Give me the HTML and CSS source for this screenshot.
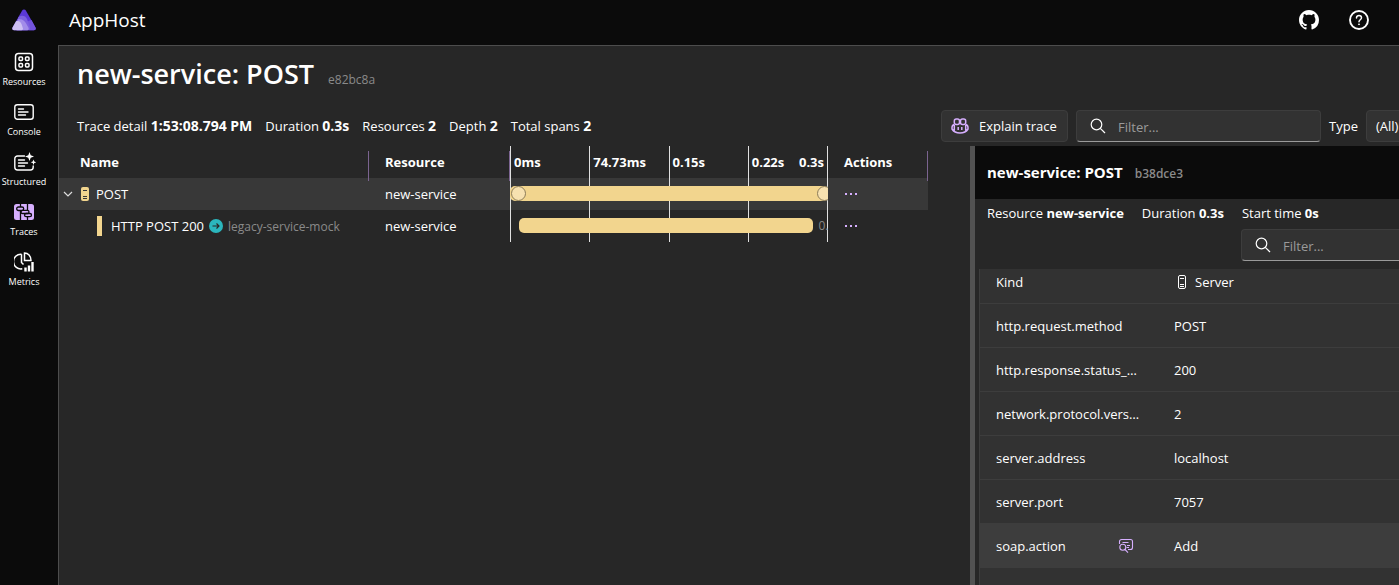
FILE: index.html
```html
<!DOCTYPE html>
<html lang="en">
<head>
    <meta charset="UTF-8">
    <meta name="viewport" content="width=device-width, initial-scale=1.0">
    <title>AppHost traces</title>
    <link rel="stylesheet" href="styles.css">
</head>
<body>
    <header class="top-bar">
        <a class="logo" href="#" aria-label="Home">
            <svg width="24" height="22" viewBox="0 0 24 22">
                <path d="M12 .5c.9 0 1.500.4 2 1.200l9.500 16.800c.7 1.300-.1 2.700-1.500 2.700H2C.6 21.200-.2 19.800.5 18.500L10 1.700C10.500.9 11.100.5 12 .5z" fill="#5a38d6"/>
                <path d="M15 12.500l4.500-1.500 4 7.500c.7 1.300-.1 2.700-1.500 2.700h-5z" fill="#7455dd"/>
                <path d="M6.300 8.200C9.500 5.500 13.500 6.500 15 10l3 8.500c.5 1.500-.3 2.700-1.800 2.700H4z" fill="#7d61df"/>
                <path d="M5.500 10.500c4-1.200 7 .8 8.500 3.700l2.500 4.600c.6 1.200 0 2.400-1.300 2.400H5z" fill="#a28ce9"/>
                <path d="M4 12.300c3-.9 5 1 5.700 3.200l1.200 3.700c.4 1.200-.3 2-1.400 2H2C.6 21.200-.2 19.800.5 18.500z" fill="#cdbff3"/>
            </svg>
        </a>
        <span class="app-name">AppHost</span>
        <div class="top-actions">
            <a href="#" aria-label="GitHub">
                <svg width="20" height="20" viewBox="0 0 16 16" fill="#fff"><path d="M8 0C3.580 0 0 3.580 0 8c0 3.540 2.290 6.530 5.470 7.590.4.070.55-.17.55-.38 0-.19-.01-.82-.01-1.490-2.010.37-2.530-.49-2.690-.94-.09-.23-.48-.94-.82-1.130-.28-.15-.68-.52-.01-.53.63-.01 1.080.58 1.230.82.72 1.210 1.870.87 2.330.66.07-.52.28-.87.51-1.070-1.780-.2-3.640-.89-3.640-3.950 0-.87.31-1.590.82-2.150-.08-.2-.36-1.020.08-2.120 0 0 .67-.21 2.200.82.64-.18 1.320-.27 2-.27s1.360.09 2 .27c1.530-1.040 2.200-.82 2.200-.82.44 1.100.16 1.920.08 2.120.51.56.82 1.270.82 2.150 0 3.070-1.870 3.750-3.650 3.950.29.25.54.73.54 1.480 0 1.070-.01 1.930-.01 2.200 0 .21.15.46.55.38A8.010 8.010 0 0 0 16 8c0-4.420-3.580-8-8-8z"/></svg>
            </a>
            <button type="button" class="icon-btn" aria-label="Help">
                <svg width="22" height="22" viewBox="0 0 22 22" fill="none" stroke="#fff"><circle cx="11" cy="11" r="9" stroke-width="1.900"/><path d="M8.500 9c0-1.600 1.100-2.600 2.500-2.600s2.500 1 2.500 2.400c0 1.900-2.500 2-2.500 4" stroke-width="1.500" stroke-linecap="round"/><circle cx="11" cy="15.300" r=".5" fill="#fff"/></svg>
            </button>
        </div>
    </header>

    <div class="layout">
        <nav class="side-nav">
            <a href="#">
                <svg width="20" height="20" viewBox="0 0 20 20" fill="none" stroke="#fff" stroke-width="1.500"><rect x="1.500" y="1.500" width="17" height="17" rx="3"/><rect x="5" y="5" width="3.500" height="3.500" rx="1"/><rect x="11.500" y="5" width="3.500" height="3.500" rx="1"/><rect x="5" y="11.500" width="3.500" height="3.500" rx="1"/><rect x="11.500" y="11.500" width="3.500" height="3.500" rx="1"/></svg>
                <span>Resources</span>
            </a>
            <a href="#">
                <svg width="20" height="20" viewBox="0 0 20 20" fill="none" stroke="#fff" stroke-width="1.400" stroke-linecap="round"><rect x=".8" y="2.700" width="18.400" height="14.600" rx="2.500"/><path d="M4.500 7h5M4.500 10h9.500M4.500 13h7"/></svg>
                <span>Console</span>
            </a>
            <a href="#">
                <svg class="wide" width="22" height="20" viewBox="0 0 22 20" fill="none" stroke="#fff" stroke-width="1.400" stroke-linecap="round"><path d="M10.500 4H3.500A2.700 2.700 0 0 0 .8 6.700v8.600A2.700 2.700 0 0 0 3.500 18h13a2.700 2.700 0 0 0 2.700-2.700V14M4.500 8h6M4.500 11h9M4.500 14h6"/><path d="M15.500 0l1.200 3.300L20 4.500l-3.300 1.200L15.500 9l-1.200-3.300L11 4.500l3.300-1.200zM19.500 7.500l.8 2 2 .8-2 .8-.8 2-.8-2-2-.8 2-.8z" fill="#fff" stroke="none"/></svg>
                <span>Structured</span>
            </a>
            <a href="#" class="active">
                <svg width="20" height="20" viewBox="0 0 20 20" fill="none" stroke="#0b0b0b" stroke-width="1.300"><rect x="0" y="2" width="20" height="16" rx="2.500" fill="#d6affe" stroke="none"/><path d="M6.500 2v3M6.500 8.500V18M13.500 2v6M13.500 14.500V18"/><rect x="2.700" y="5" width="7" height="3.500" rx="1.700"/><rect x="7" y="8.300" width="8" height="3.200" rx="1.600"/><rect x="10.500" y="11.500" width="7" height="3.200" rx="1.600"/></svg>
                <span>Traces</span>
            </a>
            <a href="#">
                <svg width="20" height="20" viewBox="0 0 20 20" fill="none" stroke="#fff" stroke-width="1.500"><path d="M7.500 2.300a7.300 7.300 0 1 0 .8 14.400M10.500 1v7.500H17C17 4 14 1 10.500 1zM7.500 2.300v8.200l2 2"/><path d="M11.500 19.500v-4M15 19.500v-6M18.500 19.500v-9.500" stroke-width="2.400"/></svg>
                <span>Metrics</span>
            </a>
        </nav>

        <main class="page">
            <div class="page-title">
                <h1>new-service: POST</h1>
                <span class="trace-id">e82bc8a</span>
            </div>

            <div class="toolbar">
                <div class="facts trace-facts">
                    <span>Trace detail <b>1:53:08.794 PM</b></span>
                    <span>Duration <b>0.3s</b></span>
                    <span>Resources <b>2</b></span>
                    <span>Depth <b>2</b></span>
                    <span>Total spans <b>2</b></span>
                </div>
                <div class="controls">
                    <button type="button" class="btn">
                        <svg width="18" height="16" viewBox="0 0 18 16" fill="none" stroke="#d6affe" stroke-width="1.500"><rect x="3.300" y="1" width="5.200" height="5.500" rx="2"/><rect x="9.500" y="1" width="5.200" height="5.500" rx="2"/><path d="M3.300 6.500C1.500 7 1 8 1 9.500V11c1.500 2.500 4.500 4 8 4s6.500-1.500 8-4V9.500c0-1.500-.5-2.500-2.300-3M3.300 7v5.500M14.700 7v5.500M7.200 9v3M10.800 9v3"/></svg>
                        Explain trace
                    </button>
                    <label class="search">
                        <svg width="16" height="16" viewBox="0 0 16 16" fill="none" stroke="#fff" stroke-width="1.200"><circle cx="6.500" cy="6.500" r="5.300"/><path d="M10.300 10.300L15 15"/></svg>
                        <input type="text" placeholder="Filter..." aria-label="Filter spans">
                    </label>
                    <label for="span-type">Type</label>
                    <select id="span-type">
                        <option>(All)</option>
                    </select>
                </div>
            </div>

            <div class="split">
                <section class="trace-pane">
                    <table class="spans">
                        <colgroup>
                            <col class="col-name">
                            <col class="col-resource">
                            <col>
                            <col class="col-actions">
                        </colgroup>
                        <thead>
                            <tr>
                                <th class="resizable">Name</th>
                                <th class="resizable">Resource</th>
                                <th class="timeline">
                                    <div class="ticks">
                                        <span>0ms</span>
                                        <span>74.73ms</span>
                                        <span>0.15s</span>
                                        <span class="last"><span>0.22s</span><span>0.3s</span></span>
                                    </div>
                                </th>
                                <th class="resizable">Actions</th>
                            </tr>
                        </thead>
                        <tbody>
                            <tr class="selected">
                                <td>
                                    <div class="span-name">
                                        <svg width="10" height="10" viewBox="0 0 10 10" fill="none" stroke="#ddd" stroke-width="1.200"><path d="M1 3l4 4 4-4"/></svg>
                                        <svg class="server" width="8" height="14" viewBox="0 0 8 14"><rect width="8" height="14" rx="2" fill="#f2d58e"/><path d="M2 3.500h4M2 9.500h4M2 11.500h4" stroke="#383838"/></svg>
                                        <span>POST</span>
                                    </div>
                                </td>
                                <td>new-service</td>
                                <td class="timeline">
                                    <div class="ticks"><span></span><span></span><span></span><span></span></div>
                                    <div class="bar" style="left: 0%; width: 100%">
                                        <i class="event start"></i>
                                        <i class="event end"></i>
                                    </div>
                                </td>
                                <td><button type="button" class="more" aria-label="Actions"><i></i><i></i><i></i></button></td>
                            </tr>
                            <tr>
                                <td>
                                    <div class="span-name child">
                                        <i class="color-mark"></i>
                                        <span>HTTP POST 200</span>
                                        <svg width="14" height="14" viewBox="0 0 14 14"><circle cx="7" cy="7" r="7" fill="#2bb6bd"/><path d="M3.500 7h6.500M7.500 4.500L10 7l-2.500 2.500" fill="none" stroke="#272727" stroke-width="1.200"/></svg>
                                        <span class="peer">legacy-service-mock</span>
                                    </div>
                                </td>
                                <td>new-service</td>
                                <td class="timeline">
                                    <div class="ticks"><span></span><span></span><span></span><span></span></div>
                                    <div class="bar" style="left: 2.700%; width: 92.700%"></div>
                                    <div class="bar-label" style="left: 97%">0.28s</div>
                                </td>
                                <td><button type="button" class="more" aria-label="Actions"><i></i><i></i><i></i></button></td>
                            </tr>
                        </tbody>
                    </table>
                </section>

                <div class="splitter"></div>

                <aside class="details">
                    <div class="details-title">
                        <h2>new-service: POST</h2>
                        <span class="span-id">b38dce3</span>
                    </div>
                    <div class="facts details-facts">
                        <span>Resource <b>new-service</b></span>
                        <span>Duration <b>0.3s</b></span>
                        <span>Start time <b>0s</b></span>
                    </div>
                    <div class="details-filter">
                        <label class="search">
                            <svg width="16" height="16" viewBox="0 0 16 16" fill="none" stroke="#fff" stroke-width="1.200"><circle cx="6.500" cy="6.500" r="5.300"/><path d="M10.300 10.300L15 15"/></svg>
                            <input type="text" placeholder="Filter..." aria-label="Filter properties">
                        </label>
                    </div>
                    <div class="props-scroll">
                        <table class="props">
                            <tr>
                                <th scope="row"><div class="key">Kind</div></th>
                                <td><div class="kind"><svg width="10" height="14" viewBox="0 0 10 14" fill="none" stroke="#fff"><rect x="1.500" y=".5" width="7" height="13" rx="1.500"/><path d="M3 3.500h4M3 9.500h4M3 11.500h4"/></svg>Server</div></td>
                            </tr>
                            <tr>
                                <th scope="row"><div class="key">http.request.method</div></th>
                                <td>POST</td>
                            </tr>
                            <tr>
                                <th scope="row"><div class="key">http.response.status_code</div></th>
                                <td>200</td>
                            </tr>
                            <tr>
                                <th scope="row"><div class="key">network.protocol.version</div></th>
                                <td>2</td>
                            </tr>
                            <tr>
                                <th scope="row"><div class="key">server.address</div></th>
                                <td>localhost</td>
                            </tr>
                            <tr>
                                <th scope="row"><div class="key">server.port</div></th>
                                <td>7057</td>
                            </tr>
                            <tr class="hover">
                                <th scope="row">
                                    <div class="key with-action">soap.action
                                        <button type="button" class="icon-btn" aria-label="View value">
                                            <svg width="16" height="16" viewBox="0 0 16 16" fill="none" stroke="#d6affe" stroke-width="1.100"><path d="M1.500 6V3.500a2 2 0 0 1 2-2h9a2 2 0 0 1 2 2v6a2 2 0 0 1-2 2H10M4.500 4.500h6M9 7.500h3M8.500 9.500h2.500"/><circle cx="4.800" cy="9.300" r="3"/><path d="M7 11.500l3 3.200"/></svg>
                                        </button>
                                    </div>
                                </th>
                                <td>Add</td>
                            </tr>
                            <tr>
                                <th scope="row"></th>
                                <td></td>
                            </tr>
                        </table>
                    </div>
                </aside>
            </div>
        </main>
    </div>
</body>
</html>
```
FILE: styles.css
```css
* {
    box-sizing: border-box;
}
body {
    margin: 0;
    height: 100vh;
    display: flex;
    flex-direction: column;
    overflow: hidden;
    background-color: #0b0b0b;
    color: #fff;
    font-family: "Open Sans", "Noto Sans", sans-serif;
    font-size: 13px;
    line-height: 20px;
}
a {
    color: inherit;
    text-decoration: none;
}
button, input, select {
    font: inherit;
    color: inherit;
}
svg {
    display: block;
    flex: none;
}
h1, h2 {
    margin: 0;
    font-weight: 600;
}
.icon-btn {
    padding: 0;
    border: none;
    background: none;
    cursor: pointer;
}

/* top bar */
.top-bar {
    flex: none;
    height: 45px;
    display: flex;
    align-items: center;
    padding: 0 29px 5px 12px;
}
.app-name {
    margin-left: 33px;
    font-size: 19px;
    line-height: 28px;
}
.top-actions {
    margin-left: auto;
    display: flex;
    align-items: center;
    gap: 29px;
}

.layout {
    flex: 1;
    min-height: 0;
    display: flex;
}
.side-nav {
    flex: none;
    width: 58px;
    padding-right: 10px;
}
.side-nav a {
    height: 50px;
    display: flex;
    flex-direction: column;
    align-items: center;
    padding-top: 7px;
    font-size: 9px;
    line-height: 20px;
}
.side-nav .wide {
    margin-left: 2px;
}

.page {
    flex: 1;
    min-width: 0;
    display: flex;
    flex-direction: column;
    border-top: 1px solid #4d4d4d;
    border-left: 1px solid #4d4d4d;
    background-color: #272727;
}
.page-title {
    display: flex;
    align-items: baseline;
    gap: 14px;
    height: 64px;
    padding: 10px 18px 0;
}
.page-title h1 {
    font-size: 27px;
    line-height: 36px;
}
.trace-id {
    color: #8a8a8a;
    font-size: 12px;
}

/* toolbar */
.toolbar {
    display: flex;
    align-items: center;
    height: 32px;
    padding-left: 18px;
}
.facts {
    flex: 1;
    display: flex;
    gap: 13px;
    white-space: nowrap;
}
.trace-facts b {
    font-size: 14px;
}
.controls {
    flex: none;
    width: 458px;
    display: flex;
    align-items: center;
    gap: 8px;
    overflow: hidden;
}
.btn {
    flex: none;
    display: flex;
    align-items: center;
    gap: 10px;
    width: 127px;
    height: 32px;
    padding: 0 9px;
    border: 1px solid #3d3d3d;
    border-radius: 4px;
    background-color: #323232;
    white-space: nowrap;
    cursor: pointer;
}
.search {
    flex: none;
    width: 245px;
    height: 32px;
    display: flex;
    align-items: center;
    gap: 12px;
    padding: 0 13px;
    border: 1px solid #3d3d3d;
    border-bottom-color: #9a9a9a;
    border-radius: 4px;
    background-color: #323232;
}
.search input {
    flex: 1;
    min-width: 0;
    padding: 2px 0 0;
    border: none;
    outline: none;
    background: none;
}
.search input::placeholder {
    color: #9a9a9a;
}
select {
    flex: none;
    width: 120px;
    height: 32px;
    padding: 0 9px;
    appearance: none;
    border: 1px solid #3d3d3d;
    border-radius: 4px;
    background-color: #323232;
}

.split {
    flex: 1;
    min-height: 0;
    display: flex;
    margin-top: 4px;
}
.trace-pane {
    flex: 1;
    min-width: 0;
    padding-right: 42px;
}
.splitter {
    flex: none;
    width: 5px;
    background-color: #525252;
}

/* span table */
.spans {
    width: 100%;
    table-layout: fixed;
    border-collapse: collapse;
}
.col-name {
    width: 310px;
}
.col-resource {
    width: 141px;
}
.col-actions {
    width: 100px;
}
.spans th, .spans td {
    position: relative;
    height: 32px;
    padding: 0 16px;
    text-align: left;
    font-weight: 400;
}
.spans th {
    font-weight: 700;
}
.spans th:first-child {
    padding-left: 21px;
}
.spans td:first-child {
    padding: 0;
}
.spans .resizable::after {
    content: "";
    position: absolute;
    top: 5px;
    right: 0;
    width: 1px;
    height: 30px;
    background-color: #7b6490;
    z-index: 1;
}
.selected {
    background-color: #383838;
}
.spans .timeline {
    padding: 0;
    overflow: hidden;
}
.ticks {
    height: 32px;
    display: grid;
    grid-template-columns: repeat(4, 1fr);
    line-height: 32px;
    border-right: 1px solid #e0e0e0;
}
.ticks > span {
    min-width: 0;
    padding-left: 3px;
    border-left: 1px solid #e0e0e0;
}
.ticks .last {
    display: flex;
    justify-content: space-between;
    padding-right: 3px;
}
.bar {
    position: absolute;
    top: 8px;
    height: 15px;
    border-radius: 5px;
    background-color: #f2d58e;
}
.bar-label {
    position: absolute;
    top: 6px;
    color: #8a8a8a;
    font-size: 12px;
}
.event {
    position: absolute;
    top: 0;
    width: 15px;
    height: 15px;
    border: 1px solid #8c7c58;
    border-radius: 50%;
    background-color: #f7e1b0;
}
.start {
    left: 1px;
}
.end {
    right: -4px;
}
.span-name {
    display: flex;
    align-items: center;
    padding-left: 4px;
}
.span-name .server {
    margin: 0 7px 0 8px;
}
.child {
    gap: 5px;
    padding-left: 38px;
}
.color-mark {
    width: 5px;
    height: 20px;
    margin-right: 4px;
    background-color: #f2d58e;
}
.peer {
    padding-top: 1px;
    color: #8a8a8a;
    font-size: 12px;
}
.more {
    display: flex;
    gap: 3px;
    padding: 8px 1px;
    border: none;
    background: none;
    cursor: pointer;
}
.more i {
    width: 2px;
    height: 2px;
    background-color: #d6affe;
}

/* details panel */
.details {
    flex: none;
    width: 424px;
    display: flex;
    flex-direction: column;
    overflow: hidden;
}
.details-title {
    flex: none;
    display: flex;
    align-items: baseline;
    gap: 12px;
    height: 53px;
    padding: 16px 12px 0;
    background-color: #0b0b0b;
}
.details-title h2 {
    font-size: 15px;
    font-weight: 700;
    line-height: 20px;
}
.span-id {
    color: #8a8a8a;
    font-size: 12px;
    font-weight: 600;
}
.details-facts {
    flex: none;
    gap: 18px;
    padding: 4px 12px 0;
}
.details-filter {
    flex: none;
    display: flex;
    padding: 6px 0 8px 266px;
}
.props-scroll {
    flex: 1;
    min-height: 0;
    margin-left: 4px;
    overflow: hidden;
}
.props {
    width: 100%;
    margin-top: -9px;
    table-layout: fixed;
    border-spacing: 0;
    border-left: 1px solid #3d3d3d;
    background-color: #323232;
}
.props th, .props td {
    height: 44px;
    padding: 0 16px;
    border-bottom: 1px solid #3d3d3d;
    text-align: left;
    font-weight: 400;
}
.props th {
    width: 178px;
}
.props .hover {
    background-color: #3d3d3d;
}
.key {
    overflow: hidden;
    text-overflow: ellipsis;
    white-space: nowrap;
}
.with-action {
    display: flex;
    align-items: center;
    justify-content: space-between;
    padding-right: 8px;
}
.kind {
    display: flex;
    align-items: center;
    gap: 8px;
    padding-left: 3px;
}
```
